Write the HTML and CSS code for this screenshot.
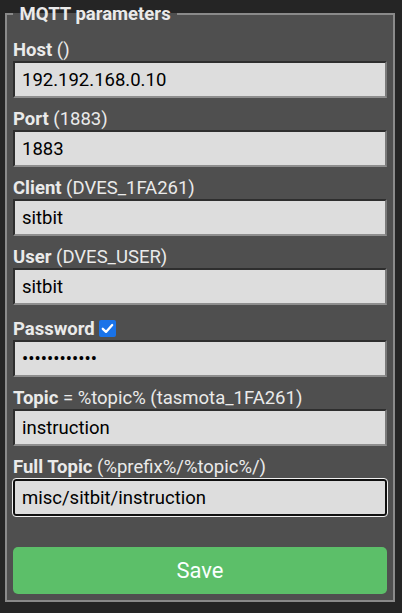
FILE: index.html
```html
<!DOCTYPE html>
<html>
<head>
<meta charset="utf-8">
<link rel="stylesheet" href="styles.css">
</head>
<body>
<fieldset class="box">
  <legend class="legend"><b>&nbsp;MQTT parameters&nbsp;</b></legend>
  <form class="form">
    <div class="row">
      <label class="lbl"><b>Host</b> ()</label>
      <input class="inp" type="text" value="192.192.168.0.10">
    </div>
    <div class="row">
      <label class="lbl"><b>Port</b> (1883)</label>
      <input class="inp" type="text" value="1883">
    </div>
    <div class="row">
      <label class="lbl"><b>Client</b> (DVES_1FA261)</label>
      <input class="inp" type="text" value="sitbit">
    </div>
    <div class="row">
      <label class="lbl"><b>User</b> (DVES_USER)</label>
      <input class="inp" type="text" value="sitbit">
    </div>
    <div class="row">
      <label class="lbl lbl-pw"><b>Password</b> <span class="chk"><svg width="17" height="17" viewBox="0 0 17 17"><path d="M3.8 8.8 L7 11.9 L13.2 5" fill="none" stroke="#fff" stroke-width="2.3" stroke-linecap="round" stroke-linejoin="round"/></svg></span></label>
      <input class="inp" type="password" value="sitbitsitbit">
    </div>
    <div class="row">
      <label class="lbl"><b>Topic</b> = %topic% (tasmota_1FA261)</label>
      <input class="inp" type="text" value="instruction">
    </div>
    <div class="row">
      <label class="lbl"><b>Full Topic</b> (%prefix%/%topic%/)</label>
      <input class="inp focus" type="text" value="misc/sitbit/instruction">
    </div>
    <button class="save" type="button">Save</button>
  </form>
</fieldset>
</body>
</html>
```
FILE: styles.css
```css
html, body {
  margin: 0;
  padding: 0;
  background: #252525;
  font-family: Roboto, "Noto Sans", sans-serif;
  color: #eaeaea;
}
body {
  padding: 3px 7px 0 5px;
}
.box {
  margin: 0;
  background: #4f4f4f;
  border: 2px solid #8a8a8a;
  padding: 0 6px 6px 6px;
  min-width: 0;
}
.legend {
  padding: 0 2px;
  font-size: 18.5px;
  line-height: 22px;
  color: #eaeaea;
}
.form {
  display: flex;
  flex-direction: column;
  padding-top: 14px;
}
.row {
  display: flex;
  flex-direction: column;
  margin-bottom: 10px;
}
.lbl {
  display: block;
  font-size: 18.5px;
  line-height: 22px;
  height: 22px;
  color: #eaeaea;
  white-space: nowrap;
}
.lbl-pw {
  height: 22px;
  padding-top: 3px;
}
.chk {
  display: inline-block;
  width: 17px;
  height: 17px;
  background: #1a73e8;
  border-radius: 2px;
  vertical-align: -2px;
}
.chk svg {
  display: block;
}
.inp {
  box-sizing: border-box;
  width: 100%;
  height: 37px;
  margin: 0;
  background: #dddddd;
  color: #000;
  border: 2px solid;
  border-color: #2e2e2e #7a7a7a #8e8e8e #2e2e2e;
  font-family: Roboto, "Noto Sans", sans-serif;
  font-size: 18.5px;
  padding: 0 7px;
  outline: none;
}
.focus {
  border: 2px solid #101010;
  border-radius: 3px;
  outline: 1px solid #f0f0f0;
  outline-offset: 0;
  margin-top: 1px;
}
.save {
  margin-top: 21px;
  height: 47px;
  border: 0;
  border-radius: 5px;
  background: #5cbf69;
  color: #faffff;
  font-family: Roboto, "Noto Sans", sans-serif;
  font-size: 22px;
  width: 100%;
}
```
